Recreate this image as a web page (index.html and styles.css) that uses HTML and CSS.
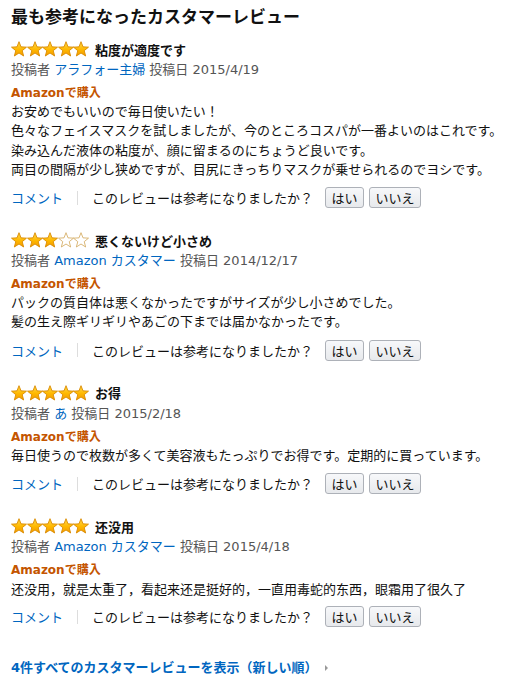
FILE: index.html
```html
<!DOCTYPE html>
<html lang="ja">
<head>
<meta charset="utf-8">
<title>最も参考になったカスタマーレビュー</title>
<link rel="stylesheet" href="styles.css">
</head>
<body>
<svg class="defs" width="0" height="0" aria-hidden="true">
  <defs>
    <linearGradient id="gold" x1="0" y1="0" x2="0" y2="1">
      <stop offset="0" stop-color="#ffd84a"/>
      <stop offset="0.55" stop-color="#ffb800"/>
      <stop offset="1" stop-color="#f29a00"/>
    </linearGradient>
    <path id="star" d="M8 0.7 L10 5.85 L15.5 6.15 L11.23 9.65 L12.65 15 L8 12 L3.35 15 L4.77 9.65 L0.5 6.15 L6 5.85 Z"/>
  </defs>
</svg>
<div class="page">
  <h2 class="heading">最も参考になったカスタマーレビュー</h2>

  <div class="review">
    <div class="title-row">
      <span class="stars">
        <svg viewBox="0 0 16 16" class="star full"><use href="#star"/></svg><svg viewBox="0 0 16 16" class="star full"><use href="#star"/></svg><svg viewBox="0 0 16 16" class="star full"><use href="#star"/></svg><svg viewBox="0 0 16 16" class="star full"><use href="#star"/></svg><svg viewBox="0 0 16 16" class="star full"><use href="#star"/></svg>
      </span>
      <span class="review-title">粘度が適度です</span>
    </div>
    <div class="byline">投稿者 <a class="link">アラフォー主婦</a> 投稿日 2015/4/19</div>
    <div class="verified">Amazonで購入</div>
    <div class="body">お安めでもいいので毎日使いたい！<br>色々なフェイスマスクを試しましたが、今のところコスパが一番よいのはこれです。<br>染み込んだ液体の粘度が、顔に留まるのにちょうど良いです。<br>両目の間隔が少し狭めですが、目尻にきっちりマスクが乗せられるのでヨシです。</div>
    <div class="actions">
      <a class="link">コメント</a>
      <span class="sep"></span>
      <span class="ask">このレビューは参考になりましたか？</span>
      <span class="btn">はい</span>
      <span class="btn">いいえ</span>
    </div>
  </div>

  <div class="review">
    <div class="title-row">
      <span class="stars">
        <svg viewBox="0 0 16 16" class="star full"><use href="#star"/></svg><svg viewBox="0 0 16 16" class="star full"><use href="#star"/></svg><svg viewBox="0 0 16 16" class="star full"><use href="#star"/></svg><svg viewBox="0 0 16 16" class="star empty"><use href="#star"/></svg><svg viewBox="0 0 16 16" class="star empty"><use href="#star"/></svg>
      </span>
      <span class="review-title">悪くないけど小さめ</span>
    </div>
    <div class="byline">投稿者 <a class="link">Amazon カスタマー</a> 投稿日 2014/12/17</div>
    <div class="verified">Amazonで購入</div>
    <div class="body">パックの質自体は悪くなかったですがサイズが少し小さめでした。<br>髪の生え際ギリギリやあごの下までは届かなかったです。</div>
    <div class="actions">
      <a class="link">コメント</a>
      <span class="sep"></span>
      <span class="ask">このレビューは参考になりましたか？</span>
      <span class="btn">はい</span>
      <span class="btn">いいえ</span>
    </div>
  </div>

  <div class="review">
    <div class="title-row">
      <span class="stars">
        <svg viewBox="0 0 16 16" class="star full"><use href="#star"/></svg><svg viewBox="0 0 16 16" class="star full"><use href="#star"/></svg><svg viewBox="0 0 16 16" class="star full"><use href="#star"/></svg><svg viewBox="0 0 16 16" class="star full"><use href="#star"/></svg><svg viewBox="0 0 16 16" class="star full"><use href="#star"/></svg>
      </span>
      <span class="review-title">お得</span>
    </div>
    <div class="byline">投稿者 <a class="link">あ</a> 投稿日 2015/2/18</div>
    <div class="verified">Amazonで購入</div>
    <div class="body">毎日使うので枚数が多くて美容液もたっぷりでお得です。定期的に買っています。</div>
    <div class="actions">
      <a class="link">コメント</a>
      <span class="sep"></span>
      <span class="ask">このレビューは参考になりましたか？</span>
      <span class="btn">はい</span>
      <span class="btn">いいえ</span>
    </div>
  </div>

  <div class="review">
    <div class="title-row">
      <span class="stars">
        <svg viewBox="0 0 16 16" class="star full"><use href="#star"/></svg><svg viewBox="0 0 16 16" class="star full"><use href="#star"/></svg><svg viewBox="0 0 16 16" class="star full"><use href="#star"/></svg><svg viewBox="0 0 16 16" class="star full"><use href="#star"/></svg><svg viewBox="0 0 16 16" class="star full"><use href="#star"/></svg>
      </span>
      <span class="review-title zh">还没用</span>
    </div>
    <div class="byline">投稿者 <a class="link">Amazon カスタマー</a> 投稿日 2015/4/18</div>
    <div class="verified">Amazonで購入</div>
    <div class="body zh">还没用，就是太重了，看起来还是挺好的，一直用毒蛇的东西，眼霜用了很久了</div>
    <div class="actions">
      <a class="link">コメント</a>
      <span class="sep"></span>
      <span class="ask">このレビューは参考になりましたか？</span>
      <span class="btn">はい</span>
      <span class="btn">いいえ</span>
    </div>
  </div>

  <div class="footer">
    <a class="link more">4件すべてのカスタマーレビューを表示（新しい順）</a>
    <span class="caret"></span>
  </div>
</div>
</body>
</html>
```
FILE: styles.css
```css
html, body {
  margin: 0;
  padding: 0;
  background: #fff;
}
body {
  font-family: "DejaVu Sans", "Noto Sans CJK JP", sans-serif;
  font-size: 13px;
  color: #111;
}
.defs {
  position: absolute;
  width: 0;
  height: 0;
  overflow: hidden;
}
.page {
  padding: 5px 11px 0 11px;
}
.heading {
  margin: 0 0 10px 0;
  font-size: 17px;
  line-height: 24px;
  font-weight: bold;
  color: #111;
}
.review {
  display: flex;
  flex-direction: column;
  margin-bottom: 22px;
}
.title-row {
  display: flex;
  align-items: center;
  height: 20px;
  gap: 6px;
}
.stars {
  display: flex;
}
.star {
  width: 16px;
  height: 16px;
  display: block;
  margin-right: -0.4px;
}
.star.full use {
  fill: url(#gold);
  stroke: #d98a00;
  stroke-width: 0.9;
  stroke-linejoin: round;
}
.star.empty use {
  fill: #fff;
  stroke: #d6b06a;
  stroke-width: 0.9;
  stroke-linejoin: round;
}
.review-title {
  font-weight: bold;
  font-size: 13px;
  color: #111;
}
.zh {
  font-family: "Noto Sans CJK SC", "Noto Sans CJK JP", sans-serif;
}
.byline {
  margin-top: 1px;
  line-height: 20px;
  color: #555;
}
.link {
  color: #0066c0;
  text-decoration: none;
}
.verified {
  margin-top: 4px;
  line-height: 18px;
  font-size: 12px;
  font-weight: bold;
  color: #c45500;
}
.body {
  line-height: 19.3px;
  color: #111;
}
.actions {
  display: flex;
  align-items: center;
  height: 21px;
  margin-top: 8px;
}
.sep {
  width: 1px;
  height: 14px;
  background: #ddd;
  margin: 0 14px;
}
.ask {
  color: #111;
  margin-right: 12px;
}
.btn {
  display: inline-flex;
  align-items: center;
  justify-content: center;
  height: 19px;
  padding: 0 5.5px;
  margin-right: 5px;
  border: 1px solid #adb1b8;
  border-radius: 3px;
  background: linear-gradient(#f7f8fa, #e7e9ec);
  color: #111;
  font-size: 13px;
}
.footer {
  display: flex;
  align-items: center;
  margin-top: 31px;
  line-height: 20px;
}
.more {
  font-weight: bold;
}
.caret {
  width: 0;
  height: 0;
  margin-left: 7px;
  border-top: 3px solid transparent;
  border-bottom: 3px solid transparent;
  border-left: 3px solid #999;
}
```
